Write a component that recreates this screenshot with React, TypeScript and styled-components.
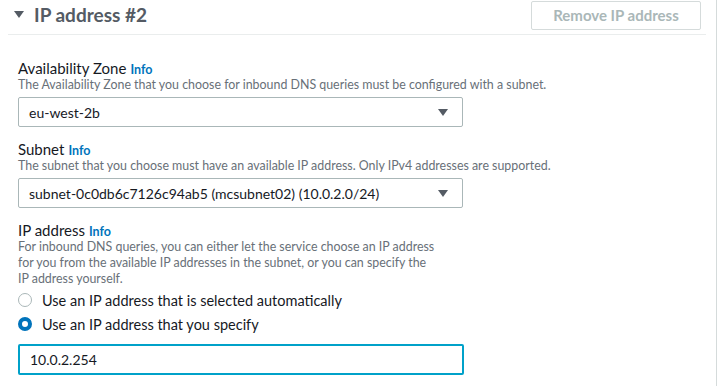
import { useState } from 'react';
import styled, { createGlobalStyle } from 'styled-components';

const GlobalStyle = createGlobalStyle`
  html, body {
    margin: 0;
    padding: 0;
    background: #ffffff;
  }
  body {
    font-family: Lato, "Liberation Sans", sans-serif;
    color: #16191f;
  }
`;

const Panel = styled.div`
  width: 717px;
  height: 386px;
  box-sizing: border-box;
  border-right: 1px solid #d5dbdb;
  background: #ffffff;
  overflow: hidden;
`;

const Header = styled.div`
  display: flex;
  align-items: center;
  justify-content: space-between;
  height: 34px;
  margin-left: 8px;
  margin-right: 10px;
  border-bottom: 1px solid #eaeded;
`;

const HeaderTitle = styled.div`
  display: flex;
  align-items: center;
  gap: 10px;
  padding-left: 6px;
  margin-top: -6px;
  font-size: 19px;
  font-weight: 700;
  color: #545b64;
`;

const Caret = styled.span`
  width: 0;
  height: 0;
  border-left: 5px solid transparent;
  border-right: 5px solid transparent;
  border-top: 7px solid #545b64;
`;

const RemoveButton = styled.button`
  width: 170px;
  height: 29px;
  margin-top: -4px;
  margin-right: 5px;
  border: 1px solid #d5dbdb;
  border-radius: 2px;
  background: #ffffff;
  color: #aab7b8;
  font-family: inherit;
  font-size: 15px;
  font-weight: 700;
`;

const Body = styled.div`
  display: flex;
  flex-direction: column;
  gap: 13px;
  padding: 24px 0 0 18px;
`;

const Field = styled.div`
  display: flex;
  flex-direction: column;
`;

const Label = styled.div`
  font-size: 15px;
  line-height: 18px;
  height: 18px;
  color: #16191f;
`;

const InfoLink = styled.span`
  margin-left: 4px;
  font-size: 12.5px;
  line-height: 1;
  font-weight: 700;
  color: #0073bb;
`;

const Description = styled.div`
  font-size: 12.4px;
  line-height: 16px;
  color: #687078;
  margin-bottom: 4px;
`;

const SelectBox = styled.div`
  display: flex;
  align-items: center;
  justify-content: space-between;
  width: 445px;
  height: 30px;
  box-sizing: border-box;
  padding: 0 14px 0 10px;
  border: 1px solid #aab7b8;
  border-radius: 2px;
  font-size: 14px;
  color: #16191f;
`;

const DownArrow = styled.span`
  width: 0;
  height: 0;
  border-left: 5px solid transparent;
  border-right: 5px solid transparent;
  border-top: 7px solid #545b64;
`;

const RadioGroup = styled.div`
  display: flex;
  flex-direction: column;
  gap: 4px;
  margin-top: -1px;
`;

const RadioRow = styled.label`
  display: flex;
  align-items: center;
  gap: 10px;
  height: 20px;
  font-size: 14.5px;
  color: #16191f;
`;

const RadioDot = styled.span<{ $checked: boolean }>`
  width: 14px;
  height: 14px;
  box-sizing: border-box;
  border-radius: 50%;
  background: #ffffff;
  border: ${p => (p.$checked ? '4px solid #0073bb' : '1px solid #aab7b8')};
`;

const TextInput = styled.input`
  width: 446px;
  height: 31px;
  box-sizing: border-box;
  margin-top: 10px;
  padding: 0 10px;
  border: 2px solid #00a1c9;
  border-radius: 2px;
  font-family: inherit;
  font-size: 14px;
  color: #16191f;
  outline: none;
`;

export default function App() {
  const [mode, setMode] = useState<'auto' | 'manual'>('manual');
  const [ip, setIp] = useState('10.0.2.254');

  return (
    <>
      <GlobalStyle />
      <Panel>
        <Header>
          <HeaderTitle>
            <Caret />
            IP address #2
          </HeaderTitle>
          <RemoveButton disabled>Remove IP address</RemoveButton>
        </Header>
        <Body>
          <Field>
            <Label>
              Availability Zone<InfoLink>Info</InfoLink>
            </Label>
            <Description>
              The Availability Zone that you choose for inbound DNS queries must be configured with a subnet.
            </Description>
            <SelectBox>
              eu-west-2b
              <DownArrow />
            </SelectBox>
          </Field>
          <Field>
            <Label>
              Subnet<InfoLink>Info</InfoLink>
            </Label>
            <Description>
              The subnet that you choose must have an available IP address. Only IPv4 addresses are supported.
            </Description>
            <SelectBox>
              subnet-0c0db6c7126c94ab5 (mcsubnet02) (10.0.2.0/24)
              <DownArrow />
            </SelectBox>
          </Field>
          <Field>
            <Label>
              IP address<InfoLink>Info</InfoLink>
            </Label>
            <Description>
              For inbound DNS queries, you can either let the service choose an IP address
              <br />
              for you from the available IP addresses in the subnet, or you can specify the
              <br />
              IP address yourself.
            </Description>
            <RadioGroup>
              <RadioRow onClick={() => setMode('auto')}>
                <RadioDot $checked={mode === 'auto'} />
                Use an IP address that is selected automatically
              </RadioRow>
              <RadioRow onClick={() => setMode('manual')}>
                <RadioDot $checked={mode === 'manual'} />
                Use an IP address that you specify
              </RadioRow>
            </RadioGroup>
            <TextInput value={ip} onChange={e => setIp(e.target.value)} />
          </Field>
        </Body>
      </Panel>
    </>
  );
}
